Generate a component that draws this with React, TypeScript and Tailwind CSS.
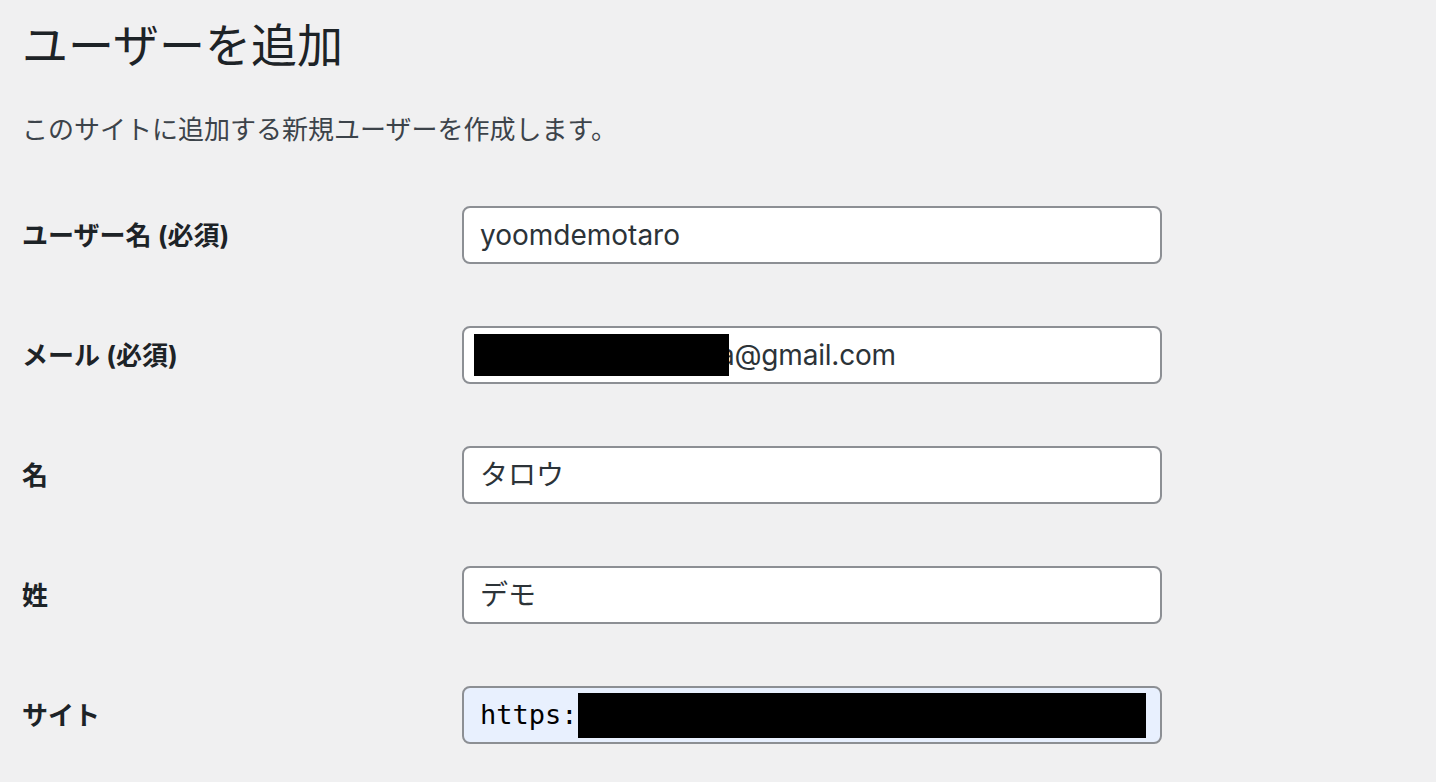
const FONT = 'font-[Inter,"Noto_Sans_CJK_JP",sans-serif]'

interface FieldRowProps {
  label: string
  children: React.ReactNode
  autofill?: boolean
}

function FieldRow({ label, children, autofill }: FieldRowProps) {
  return (
    <div className="flex h-[120px] items-center">
      <div className="w-[440px] text-[26px] font-bold text-[#1d2327]">{label}</div>
      <div
        className={`flex h-[58px] w-[700px] items-center overflow-hidden rounded-[8px] border-2 border-[#8c8f94] pl-[16px] text-[28px] text-[#2c3338] ${
          autofill ? 'bg-[#e8f0fe]' : 'bg-white'
        }`}
      >
        {children}
      </div>
    </div>
  )
}

export default function App() {
  return (
    <div className={`min-h-[782px] w-full bg-[#f0f0f1] pl-[22px] ${FONT}`}>
      <h1 className="pt-[15px] text-[46px] leading-[60px] font-normal text-[#1d2327]">
        ユーザーを追加
      </h1>
      <p className="mt-[35px] text-[26px] leading-[40px] text-[#3c434a]">
        このサイトに追加する新規ユーザーを作成します。
      </p>

      {/* Form rows */}
      <div className="mt-[25px] flex flex-col">
        <FieldRow label="ユーザー名 (必須)">
          <span>yoomdemotaro</span>
        </FieldRow>
        <FieldRow label="メール (必須)">
          <span className="relative z-10 -ml-[6px] h-[42px] w-[255px] bg-black" />
          <span className="-ml-[10px] tracking-[-0.2px]">a@gmail.com</span>
        </FieldRow>
        <FieldRow label="名">
          <span>タロウ</span>
        </FieldRow>
        <FieldRow label="姓">
          <span>デモ</span>
        </FieldRow>
        <FieldRow label="サイト" autofill>
          <span className="font-['DejaVu_Sans_Mono',monospace] text-[27px] text-black">https:</span>
          <span className="h-[45px] w-[568px] bg-black" />
        </FieldRow>
      </div>
    </div>
  )
}
